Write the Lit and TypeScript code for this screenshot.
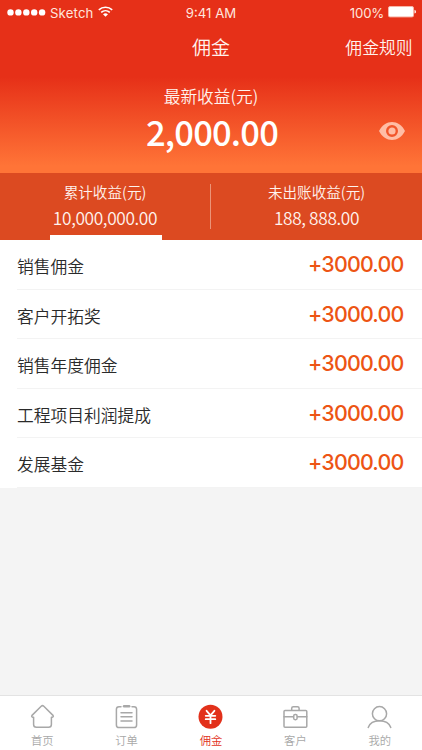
import { LitElement, html, css, svg } from "lit";
import { customElement } from "lit/decorators.js";
import { classMap } from "lit/directives/class-map.js";

const ROWS = ["销售佣金", "客户开拓奖", "销售年度佣金", "工程项目利润提成", "发展基金"];

const ICONS = {
  home: svg`<path d="M3.6 13.2 H2.4 Q1.2 12.6 2 11.4 L11.2 2.2 Q12.5 1 13.8 2.2 L23 11.4 Q23.8 12.6 22.6 13.2 H21.4 V20.5 Q21.4 23.3 18.6 23.3 H6.4 Q3.6 23.3 3.6 20.5 Z"/>`,
  order: svg`<path d="M7 2.7 H5 Q2.4 2.7 2.4 5.3 V20.9 Q2.4 23.5 5 23.5 H20 Q22.6 23.5 22.6 20.9 V5.3 Q22.6 2.7 20 2.7 H18"/><path d="M10 2.2 H15.2" stroke-width="2.4"/><path d="M7 8.7 H18 M7 12.8 H18 M7 17 H18"/>`,
  money: svg`<circle class="solid" cx="12.5" cy="12.8" r="12"/><path class="yen" d="M8.6 6.8 L12.5 11.4 L16.4 6.8 M7.7 11.8 H17.3 M7.7 15.2 H17.3 M12.5 11.5 V19.2"/>`,
  client: svg`<rect x="1" y="6.4" width="22.8" height="16.8" rx="1"/><path d="M8.7 6.2 V4.3 Q8.7 2.7 10.3 2.7 H14.5 Q16.1 2.7 16.1 4.3 V6.2 M1 12.8 H10.5 M14.3 12.8 H23.8"/><rect x="10.7" y="10.5" width="3.4" height="5.2" rx="1.4"/>`,
  user: svg`<circle cx="12.5" cy="9.7" r="7.1"/><path d="M1.2 23.4 C3 18.8 7.2 16.8 12.5 16.8 C17.8 16.8 22 18.8 23.8 23.4"/>`,
};

const TABS = [
  { label: "首页", icon: ICONS.home, active: false },
  { label: "订单", icon: ICONS.order, active: false },
  { label: "佣金", icon: ICONS.money, active: true },
  { label: "客户", icon: ICONS.client, active: false },
  { label: "我的", icon: ICONS.user, active: false },
];

@customElement("app-root")
export class AppRoot extends LitElement {
  static styles = css`
    :host {
      display: flex;
      flex-direction: column;
      height: 750px;
      overflow: hidden;
      background: #f4f4f4;
      font-family: "Noto Sans CJK SC", sans-serif;
      font-weight: 350;
      color: #2a2a2a;
      white-space: nowrap;
    }
    svg { display: block; flex: none; }
    .hero {
      flex: none;
      height: 173px;
      color: #fff;
      background: linear-gradient(#e63018 0, #e63018 77px, #ff7437 166px, #ff7437 173px);
    }
    .status {
      display: grid;
      grid-template-columns: 1fr auto 1fr;
      height: 25px;
      line-height: 26px;
      font-family: Inter, sans-serif;
      font-weight: 400;
      font-size: 13.2px;
      padding: 0 6px 0 7px;
      box-sizing: border-box;
      color: #ffe6de;
    }
    .carrier, .power { display: flex; align-items: center; }
    .carrier { gap: 4px; letter-spacing: 0.15px; }
    .wifi { margin-top: -2px; }
    .power { justify-content: flex-end; gap: 4px; letter-spacing: -0.2px; }
    .battery { margin-top: -2px; }
    .time { margin-left: -1px; }
    .nav {
      display: grid;
      grid-template-columns: 1fr auto 1fr;
      height: 45px;
      line-height: 44px;
      font-size: 19px;
      padding: 0 9.5px;
      color: #fff3ee;
    }
    .rule { grid-column: 3; text-align: right; font-size: 16.8px; }
    .title { grid-column: 2; }
    .latest {
      display: grid;
      grid-template-columns: 1fr auto 1fr;
      align-items: center;
      padding-top: 14px;
    }
    .caption { grid-column: 1 / 4; text-align: center; font-size: 16.7px; line-height: 24px; color: #fff3ee; }
    .total { grid-column: 2; font-size: 34.5px; font-weight: 500; line-height: 46px; letter-spacing: -0.8px; padding-left: 2px; }
    .eye { justify-self: end; margin-right: 17px; }
    .split {
      flex: none;
      display: grid;
      grid-template-columns: 210px 1px 211px;
      height: 67.4px;
      background: #dc4a21;
      color: #fff3ee;
      text-align: center;
    }
    .divider { height: 45px; margin-top: 11px; background: #eb9478; }
    .half { display: flex; flex-direction: column; align-items: center; }
    .half-name { font-size: 14.6px; line-height: 22px; margin-top: 8px; }
    .half-value { font-size: 17.3px; line-height: 26px; margin-top: 2px; letter-spacing: -0.35px; }
    .marker { width: 112px; height: 5px; margin-top: auto; margin-left: 2px; background: #fff; }
    .list { flex: none; background: #fff; }
    .row {
      display: flex;
      justify-content: space-between;
      height: 49.5px;
      margin-left: 17px;
      padding-right: 18px;
      box-sizing: border-box;
      border-bottom: 1px solid #f3f3f3;
    }
    .name { font-size: 16.75px; line-height: 52px; }
    .amount {
      font-family: Inter, sans-serif;
      font-size: 21.4px;
      line-height: 49px;
      font-weight: 500;
      letter-spacing: -0.8px;
      padding-right: 0.5px;
      color: #ed5414;
    }
    .tabs {
      flex: none;
      margin-top: auto;
      height: 55.5px;
      box-sizing: border-box;
      border-top: 1px solid #e3e3e3;
      background: #fff;
      display: grid;
      grid-template-columns: repeat(5, 1fr);
    }
    .tab { display: flex; flex-direction: column; align-items: center; padding-top: 8px; color: #a8a8a8; }
    .tab-label { font-size: 11.3px; line-height: 16px; margin-top: 2px; }
    .on { color: #e2311b; }
    .icon { fill: none; stroke: currentColor; stroke-width: 1.5; stroke-linejoin: round; stroke-linecap: round; }
    .solid { fill: currentColor; stroke: none; }
    .yen { stroke: #fff; stroke-width: 1.8; }
  `;

  render() {
    return html`
      <div class="hero">
        <div class="status">
          <div class="carrier">
            <svg width="39" height="8" fill="#fff">
              ${[3.5, 11.4, 19.3, 27.2, 35.1].map((x) => svg`<circle cx=${x} cy="3.4" r="3.2"/>`)}
            </svg>
            <span>Sketch</span>
            <svg class="wifi" width="15" height="12" viewBox="0 0 15 12" fill="none" stroke="#fff" stroke-width="1.6">
              <path d="M.8 3.8 C4.6 .3 10.4 .3 14.2 3.8 M3.2 6.4 C5.7 4.2 9.3 4.2 11.8 6.4"/>
              <path d="M5 8.3 Q7.5 6.3 10 8.3 L7.5 10.8 Z" fill="#fff" stroke="none"/>
            </svg>
          </div>
          <span class="time">9:41 AM</span>
          <div class="power">
            <span>100%</span>
            <svg class="battery" width="28" height="12" viewBox="0 0 28 12">
              <rect x=".5" y=".5" width="25" height="10.4" rx="1.5" fill="#fff" stroke="#f8b5a8"/>
              <path d="M26.5 3.8 Q28 4.2 28 5.7 Q28 7.2 26.5 7.6 Z" fill="#fff"/>
            </svg>
          </div>
        </div>
        <div class="nav"><span class="title">佣金</span><span class="rule">佣金规则</span></div>
        <div class="latest">
          <span class="caption">最新收益(元)</span>
          <span class="total">2,000.00</span>
          <svg class="eye" width="26" height="18" viewBox="0 0 26 18">
            <path d="M0 9 C6 -3 20 -3 26 9 C20 21 6 21 0 9 Z" fill="#ffbda5"/>
            <circle cx="13" cy="9" r="4.8" fill="#ffbda5" stroke="#f2562b" stroke-width="2.4"/>
          </svg>
        </div>
      </div>
      <div class="split">
        <div class="half">
          <span class="half-name">累计收益(元)</span>
          <span class="half-value">10,000,000.00</span>
          <div class="marker"></div>
        </div>
        <div class="divider"></div>
        <div class="half">
          <span class="half-name">未出账收益(元)</span>
          <span class="half-value">188, 888.00</span>
        </div>
      </div>
      <div class="list">
        ${ROWS.map((name) => html`<div class="row"><span class="name">${name}</span><span class="amount">+3000.00</span></div>`)}
      </div>
      <div class="tabs">
        ${TABS.map((t) => html`
          <div class=${classMap({ tab: true, on: t.active })}>
            <svg class="icon" width="25" height="26" viewBox="0 0 25 26">${t.icon}</svg>
            <span class="tab-label">${t.label}</span>
          </div>`)}
      </div>
    `;
  }
}
